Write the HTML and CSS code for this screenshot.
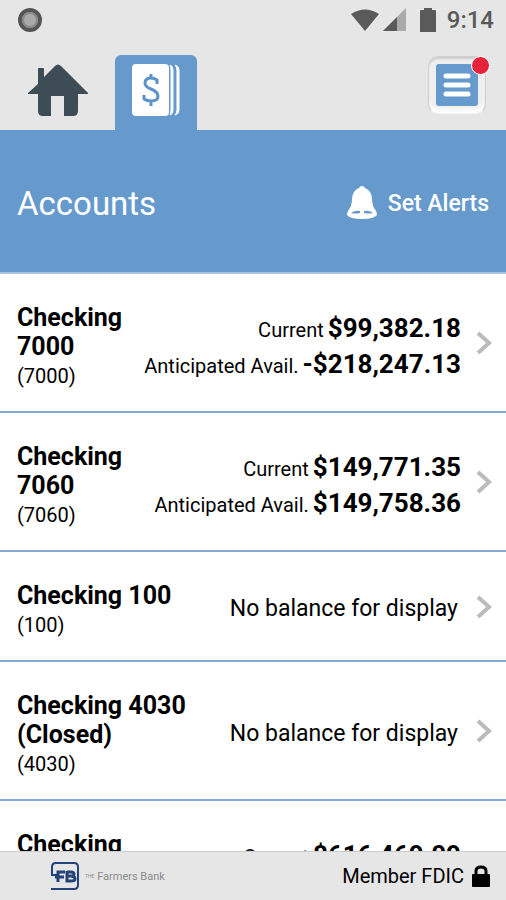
FILE: index.html
```
<!DOCTYPE html>
<html lang="en">
<head>
  <meta charset="utf-8">
  <meta name="viewport" content="width=device-width, initial-scale=1">
  <title>Accounts</title>
  <link rel="stylesheet" href="styles.css">
</head>

<body>
  <div class="status-bar">
    <svg class="status-dot" width="24" height="24" viewBox="0 0 24 24">
      <circle cx="12" cy="12" r="10" fill="#aaa" stroke="#555" stroke-width="4"/>
      <circle cx="12" cy="12" r="7" fill="none" stroke="#8a8a8a" stroke-width="2"/>
    </svg>
    <div class="status-icons">
      <svg width="30" height="24" viewBox="0 0 30 24">
        <path d="M1 6Q15-3 29 6L15 23Z" fill="#5a5a5a"/>
      </svg>
      <svg width="24" height="24" viewBox="0 0 24 24">
        <path d="M23 0V23H0Z" fill="#aaa"/>
        <path d="M14 9V23H0Z" fill="#5a5a5a"/>
      </svg>
      <svg class="battery" width="16" height="24" viewBox="0 0 16 24">
        <path d="M4 2V0H12V2H15Q16 2 16 3V24H0V3Q0 2 1 2Z" fill="#5a5a5a"/>
      </svg>
      <span class="clock">9:14</span>
    </div>
  </div>

  <nav class="tabs">
    <a class="tab" href="#home" aria-label="Home">
      <svg width="60" height="52" viewBox="0 0 60 52">
        <path d="M0 29L10 20V5Q10 4 11 4H15Q16 4 16 5V13L27 2Q30-1 33 2L60 29V30H50V47Q50 52 45 52H36V32H23V52H15Q10 52 10 47V30H0Z" fill="#3d4c55"/>
      </svg>
    </a>
    <a class="tab tab-active" href="#accounts" aria-label="Accounts">
      <svg width="48" height="52" viewBox="0 0 48 52">
        <rect width="37" height="52" rx="4" fill="#fff"/>
        <path d="M38 1Q41 2 41 6V46Q41 50 38 51Q39 49 39 46V6Q39 3 38 1Z" fill="#fff" stroke="#fff"/>
        <path d="M43 1Q47 2 47 6V46Q47 50 43 51Q45 49 45 46V6Q45 3 43 1Z" fill="#fff" stroke="#fff"/>
        <path d="M25 20V16Q22 14 19 14Q13 14 13 19Q13 23 19 25Q26 28 26 32Q26 37 19 37Q15 37 12 35V31M19 10V14M19 37V42" fill="none" stroke="#5b92ca" stroke-width="3"/>
      </svg>
    </a>
    <button class="menu-button" aria-label="Menu">
      <svg width="42" height="42" viewBox="0 0 42 42">
        <rect width="42" height="42" rx="3" fill="#6699cc"/>
        <path d="M10 12H32M10 21H32M10 30H32" stroke="#fff" stroke-width="5" stroke-linecap="round"/>
      </svg>
      <span class="badge"></span>
    </button>
  </nav>

  <header class="page-header">
    <h1>Accounts</h1>
    <a class="alerts" href="#alerts">
      <svg width="30" height="34" viewBox="0 0 30 34">
        <path d="M15 0Q17 0 18 2Q25 5 25 13Q25 20 29 25Q30 27 30 29Q27 33 15 33Q3 33 0 29Q0 27 1 25Q5 20 5 13Q5 5 12 2Q13 0 15 0Z" fill="#fff"/>
        <path d="M4 27Q8 24 13 25V27Q8 28 4 27ZM26 27Q22 24 17 25V27Q22 28 26 27Z" fill="#6699cc"/>
      </svg>
      Set Alerts
    </a>
  </header>

  <main class="accounts">
    <a class="account" href="#7000">
      <div class="account-name">
        <h2>Checking 7000</h2>
        <p>(7000)</p>
      </div>
      <div class="balances">
        <div class="balance">Current <b>$99,382.18</b></div>
        <div class="balance">Anticipated Avail. <b>-$218,247.13</b></div>
      </div>
      <svg class="chevron" width="16" height="24" viewBox="0 0 16 24"><path d="M2 2L13 12L2 22"/></svg>
    </a>
    <a class="account" href="#7060">
      <div class="account-name">
        <h2>Checking 7060</h2>
        <p>(7060)</p>
      </div>
      <div class="balances">
        <div class="balance">Current <b>$149,771.35</b></div>
        <div class="balance">Anticipated Avail. <b>$149,758.36</b></div>
      </div>
      <svg class="chevron" width="16" height="24" viewBox="0 0 16 24"><path d="M2 2L13 12L2 22"/></svg>
    </a>
    <a class="account" href="#100">
      <div class="account-name">
        <h2>Checking 100</h2>
        <p>(100)</p>
      </div>
      <div class="no-balance">No balance for display</div>
      <svg class="chevron" width="16" height="24" viewBox="0 0 16 24"><path d="M2 2L13 12L2 22"/></svg>
    </a>
    <a class="account" href="#4030">
      <div class="account-name">
        <h2>Checking 4030 (Closed)</h2>
        <p>(4030)</p>
      </div>
      <div class="no-balance">No balance for display</div>
      <svg class="chevron" width="16" height="24" viewBox="0 0 16 24"><path d="M2 2L13 12L2 22"/></svg>
    </a>
    <a class="account" href="#8000">
      <div class="account-name">
        <h2>Checking 8000</h2>
        <p>(8000)</p>
      </div>
      <div class="balances">
        <div class="balance">Current <b>$616,469.09</b></div>
        <div class="balance">Anticipated Avail. <b>$616,469.09</b></div>
      </div>
      <svg class="chevron" width="16" height="24" viewBox="0 0 16 24"><path d="M2 2L13 12L2 22"/></svg>
    </a>
  </main>

  <footer class="footer">
    <div class="bank">
      <svg width="30" height="30" viewBox="0 0 30 30">
        <path d="M7 14H2V6Q2 2 6 2H24Q28 2 28 6V24Q28 28 24 28H1" fill="none" stroke="#23437a" stroke-width="2"/>
        <path d="M8 21V11H15M5 16H14M17 11H21Q24 11 24 13Q24 15 21 15H17M21 15Q25 15 25 18Q25 20 21 20H17V10" fill="none" stroke="#23437a" stroke-width="3"/>
      </svg>
      <span class="bank-name"><small>THE</small> Farmers Bank</span>
    </div>
    <div class="member">
      Member FDIC
      <svg width="18" height="22" viewBox="0 0 18 22">
        <path d="M4 10V6Q4 2 9 2Q14 2 14 6V10" fill="none" stroke="#000" stroke-width="3"/>
        <rect y="9" width="18" height="13" rx="1"/>
      </svg>
    </div>
  </footer>
</body>
</html>
```

FILE: styles.css
```
* {
  box-sizing: border-box;
}

body {
  margin: 0;
  height: 100vh;
  display: flex;
  flex-direction: column;
  background-color: #fff;
  color: #000;
  font-family: Roboto, "Liberation Sans", sans-serif;
}

a {
  color: inherit;
  text-decoration: none;
}

h1, h2, p {
  margin: 0;
}

svg {
  display: block;
  flex-shrink: 0;
}

.status-bar {
  display: flex;
  justify-content: space-between;
  align-items: center;
  height: 40px;
  padding: 0 12px 0 18px;
  background-color: #e6e6e6;
}

.status-icons {
  display: flex;
  align-items: center;
  gap: 3px;
}

.battery {
  margin: 0 8px 0 10px;
}

.clock {
  color: #5a5a5a;
  font-size: 24px;
  font-weight: 500;
}

.tabs {
  display: flex;
  align-items: flex-end;
  height: 90px;
  padding: 0 20px 0 28px;
  background-color: #e6e6e6;
}

.tab {
  padding-bottom: 14px;
}

.tab-active {
  height: 75px;
  margin-left: 27px;
  padding: 9px 17px;
  border-radius: 6px 6px 0 0;
  background-color: #6699cc;
}

.menu-button {
  position: relative;
  margin: 0 0 16px auto;
  padding: 7px;
  border: 1px solid #d0d0d0;
  border-bottom-color: #f4f4f4;
  border-radius: 10px;
  background-color: #eee;
  box-shadow: inset 0 2px 2px #ccc, inset 0 -4px 4px #fff;
  cursor: pointer;
}

.badge {
  position: absolute;
  top: -1px;
  right: -5px;
  width: 19px;
  height: 19px;
  border: 1px solid #fff;
  border-radius: 50%;
  background-color: #e5243b;
}

.page-header {
  display: flex;
  justify-content: space-between;
  align-items: center;
  height: 144px;
  padding: 4px 17px 0;
  border-bottom: 2px solid #a8c4e0;
  background-color: #6699cc;
  color: #fff;
}

.page-header h1 {
  font-size: 33px;
  font-weight: 400;
}

.alerts {
  display: flex;
  align-items: center;
  gap: 11px;
  font-size: 23px;
  font-weight: 500;
}

.accounts {
  flex: 1;
  min-height: 0;
  overflow: hidden;
}

.account {
  display: flex;
  align-items: center;
  padding: 29px 14px 20px 17px;
  border-bottom: 2px solid #86abd3;
}

.account-name {
  flex: 1;
}

.account-name h2 {
  font-size: 25px;
  font-weight: 700;
  line-height: 29px;
}

.account-name p {
  font-size: 20px;
  line-height: 30px;
}

.balances {
  padding-bottom: 3px;
  font-size: 20px;
  white-space: nowrap;
}

.balance {
  display: flex;
  justify-content: flex-end;
  align-items: baseline;
  gap: 4px;
  height: 36px;
}

.balance b {
  font-size: 26px;
  line-height: 36px;
}

.no-balance {
  padding: 0 3px 4px 0;
  font-size: 23px;
  white-space: nowrap;
}

.chevron {
  margin: 0 0 8px 15px;
  fill: none;
  stroke: #bbb;
  stroke-width: 4;
}

.footer {
  display: flex;
  justify-content: space-between;
  align-items: center;
  height: 49px;
  padding: 0 16px 0 50px;
  border-top: 1px solid #ccc;
  background-color: #e6e6e6;
}

.bank {
  display: flex;
  align-items: center;
  gap: 5px;
}

.bank-name {
  color: #8a8a8a;
  font-size: 11px;
}

.bank-name small {
  font-size: 5px;
  vertical-align: 2px;
}

.member {
  display: flex;
  align-items: center;
  gap: 8px;
  font-size: 20px;
}
```
